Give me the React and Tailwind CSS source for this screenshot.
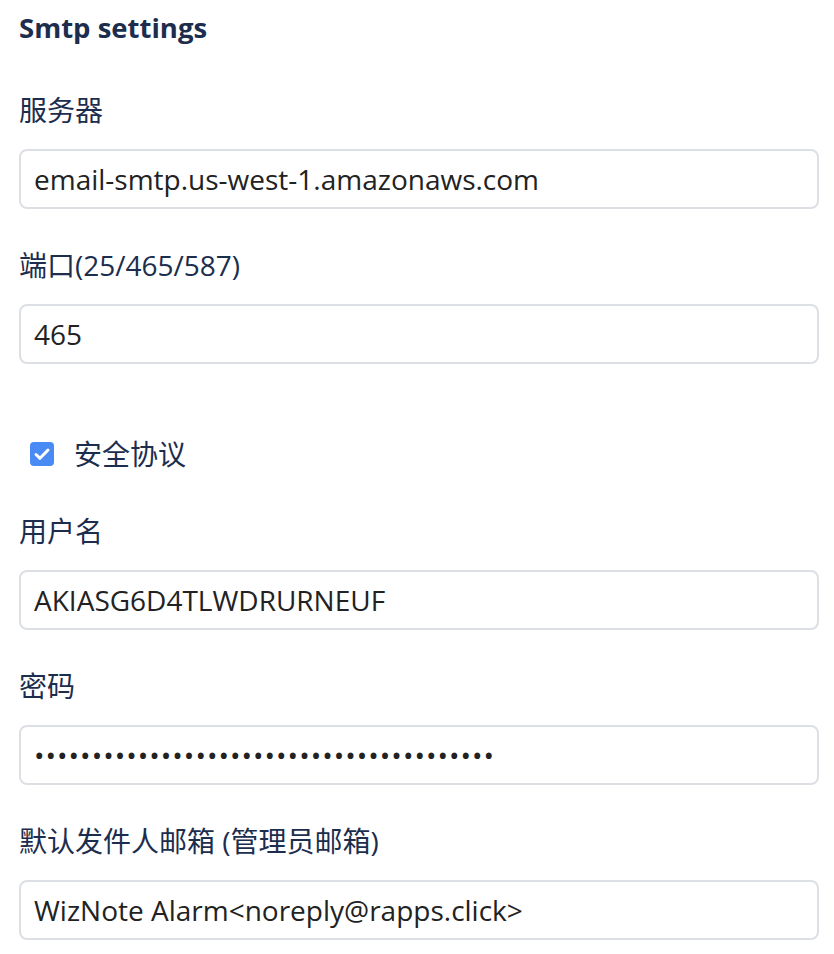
import React from 'react';

const fieldClass =
  'w-full h-[60px] rounded-[8px] border-2 border-[#dcdfe3] bg-white px-[13px] text-[28px] text-[#222] outline-none';

const Label = ({ children }) => (
  <label className="block h-[40px] leading-[40px] text-[28px] text-[#1c2d4d]">{children}</label>
);

const Field = ({ label, value, className = '' }) => (
  <div>
    <Label>{label}</Label>
    <input type="text" readOnly value={value} className={`mt-[19px] ${fieldClass} ${className}`} />
  </div>
);

export default function App() {
  const dots = '•'.repeat(40);
  return (
    <div
      className="w-[834px] h-[954px] bg-white pl-[19px] pr-[15px] pt-[8px]"
      style={{ fontFamily: '"Open Sans", "Noto Sans CJK SC", sans-serif' }}
    >
      <h2 className="h-[40px] leading-[40px] text-[27.5px] font-bold text-[#1c2d4d]">Smtp settings</h2>

      <div className="mt-[42px] flex flex-col gap-[36px]">
        <Field label="服务器" value="email-smtp.us-west-1.amazonaws.com" />
        <Field label="端口(25/465/587)" value="465" />
      </div>

      <div className="mt-[70px] flex h-[40px] items-center pl-[11px]">
        <span className="flex h-[24px] w-[24px] items-center justify-center rounded-[4px] bg-[#4a8af4]">
          <svg width="20" height="20" viewBox="0 0 20 20" fill="none">
            <path d="M4 10.5l4 3.8L16 6" stroke="white" strokeWidth="3" strokeLinecap="round" strokeLinejoin="round" />
          </svg>
        </span>
        <span className="ml-[20px] text-[28px] text-[#1c2d4d]">安全协议</span>
      </div>

      <div className="mt-[37px] flex flex-col gap-[36px]">
        <Field label="用户名" value="AKIASG6D4TLWDRURNEUF" />
        <Field label="密码" value={dots} className="tracking-[1px]" />
        <Field label="默认发件人邮箱 (管理员邮箱)" value="WizNote Alarm<noreply@rapps.click>" />
      </div>
    </div>
  );
}
